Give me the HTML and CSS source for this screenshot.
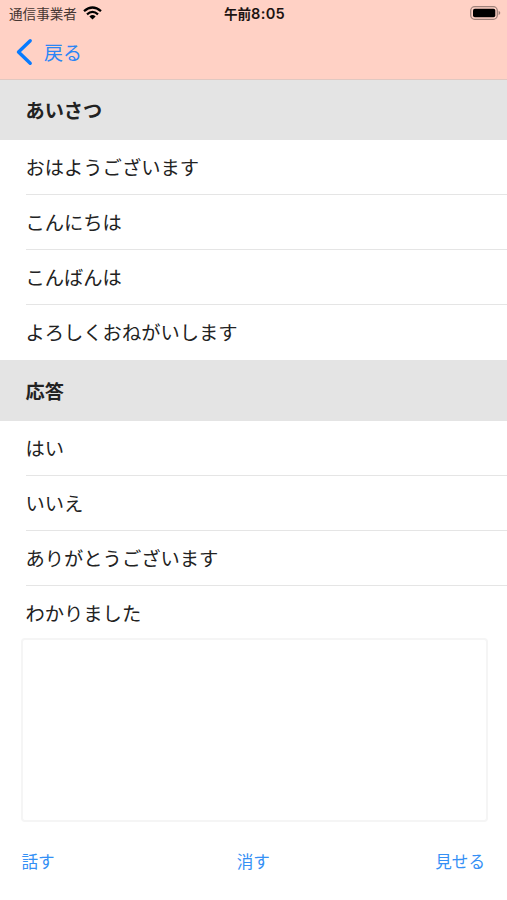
FILE: index.html
```html
<!DOCTYPE html>
<html lang="ja">
<head>
<meta charset="utf-8">
<title>あいさつ</title>
<link rel="stylesheet" href="styles.css">
</head>
<body>
<header>
<div class="status">
<div class="carrier"><span>通信事業者</span><svg width="19" height="14" viewBox="0 0 19 14"><g fill="none" stroke="#000" stroke-width="2.3"><path d="M1 5.1Q9.5-2.1 18 5.1"/><path d="M4 8.3Q9.5 3.5 15 8.3"/></g><path d="M6.4 10.4Q9.5 7.6 12.6 10.4L9.5 13.5Z"/></svg></div>
<time>午前<span>8:05</span></time>
<svg class="battery" width="31" height="14" viewBox="0 0 31 14"><rect x=".7" y=".7" width="26.6" height="12.6" rx="4" fill="none" stroke="#000" stroke-opacity=".38" stroke-width="1.3"/><rect x="3" y="2.7" width="22.3" height="8.6" rx="1.8"/><path d="M28.6 4.8Q32 7 28.6 9.2Z" opacity=".4"/></svg>
</div>
<nav><svg width="18" height="28" viewBox="0 0 18 28"><path d="M15.2 2.8L3.5 14L15.2 25.2" fill="none" stroke="#087bff" stroke-width="3.4" stroke-linecap="round" stroke-linejoin="round"/></svg><a>戻る</a></nav>
</header>
<main>
<section><h2>あいさつ</h2><ul><li>おはようございます</li><li>こんにちは</li><li>こんばんは</li><li>よろしくおねがいします</li></ul></section>
<section><h2>応答</h2><ul><li>はい</li><li>いいえ</li><li>ありがとうございます</li><li>わかりました</li></ul></section>
</main>
<div class="message"></div>
<footer><a>話す</a><a>消す</a><a>見せる</a></footer>
</body>
</html>
```
FILE: styles.css
```css
* { box-sizing: border-box; }
body { margin: 0; width: 507px; height: 900px; overflow: hidden; background: #fff; color: #222; font-family: Inter, "Noto Sans CJK JP", sans-serif; display: flex; flex-direction: column; }
header { height: 80px; background: #ffd1c5; border-bottom: 1px solid #e0c8c1; flex: none; }
.status { height: 26px; padding: 0 7px 0 9px; display: grid; grid-template-columns: 1fr auto 1fr; align-items: center; font-size: 13.6px; }
.carrier { display: flex; align-items: center; gap: 6px; color: #453632; }
.status time { font-weight: 600; color: #1c1311; }
.status time span { font-size: 14.6px; letter-spacing: .3px; }
.battery { justify-self: end; margin-right: -1px; }
nav { height: 50px; padding-left: 15px; display: flex; align-items: center; gap: 11px; color: #2b86f5; font-size: 19px; }
nav svg { margin-top: 2px; }
main { height: 558px; flex: none; overflow: hidden; }
h2 { margin: 0; height: 60px; line-height: 60px; padding: 1px 0 0 25.5px; background: #e4e4e4; font-size: 19.2px; font-weight: 700; }
section + section h2 { height: 61px; padding-top: 2px; }
ul { list-style: none; padding: 0; margin: 0 0 0 25.5px; }
li { height: 55px; line-height: 55px; padding-top: 1px; font-size: 19.3px; border-bottom: 1px solid #e5e5e5; }
li:last-child { border: 0; }
.message { height: 184px; margin: 0 19px 0 21px; flex: none; border: 2px solid #f5f5f5; border-radius: 4px; }
footer { height: 78px; padding: 0 22px 0 21.5px; display: grid; grid-template-columns: 1fr auto 1fr; align-items: center; color: #3590f5; font-size: 16.6px; }
footer a:last-child { justify-self: end; }
```
